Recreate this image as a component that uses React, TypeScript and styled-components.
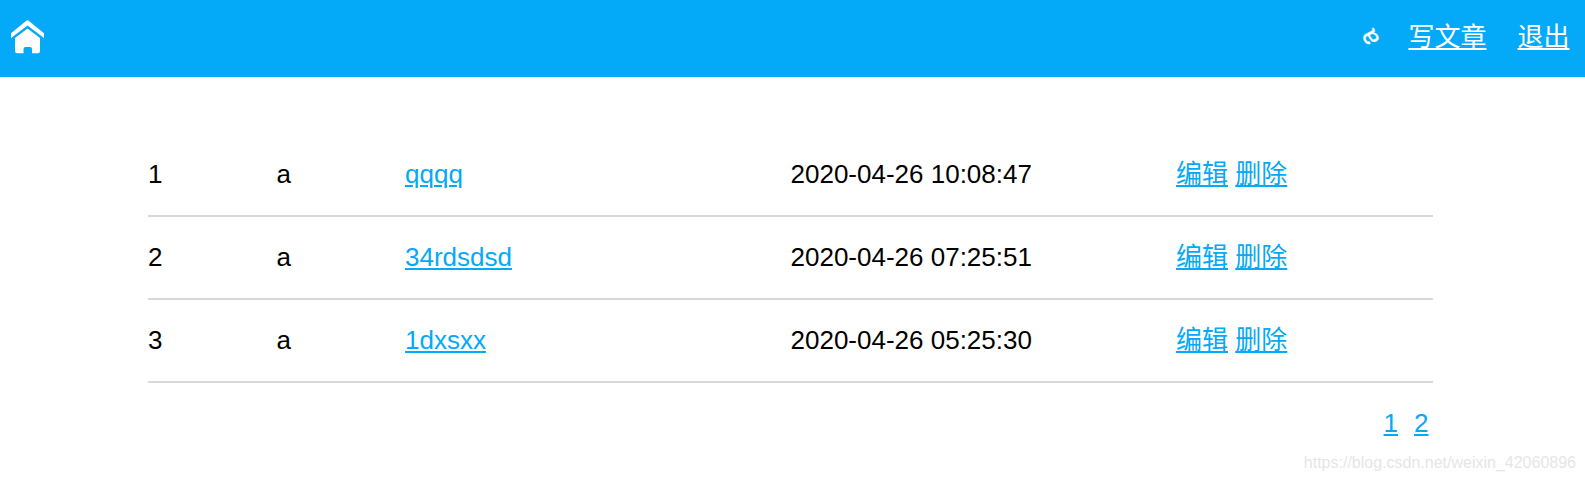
import React from 'react';
import styled, { createGlobalStyle } from 'styled-components';

const GlobalStyle = createGlobalStyle`
  body {
    margin: 0;
    background: #fff;
    color: #000;
    font-family: 'Liberation Sans', 'Noto Sans CJK SC', sans-serif;
    font-size: 26px;
  }
`;

const Header = styled.header`
  display: flex;
  align-items: center;
  justify-content: space-between;
  box-sizing: border-box;
  height: 77px;
  padding: 0 15.5px 4px 11px;
  background: #04a9f7;
`;

const HomeLink = styled.a`
  display: flex;
`;

const UserNav = styled.nav`
  display: flex;
  align-items: center;
  line-height: 40px;
`;

const Avatar = styled.span`
  width: 14px;
  margin: 0 30px 4px 0;
  color: #fff;
  font-size: 26px;
  line-height: 30px;
  text-align: center;
  -webkit-text-stroke: 0.4px #fff;
  transform: rotate(-118deg);
  transform-origin: 50% 58%;
`;

const Link = styled.a<{ $light?: boolean }>`
  color: ${({ $light }) => ($light ? '#fff' : '#04a9f7')};
  text-decoration: underline;
  text-decoration-thickness: 2px;
  text-underline-offset: 2px;
`;

const NavLink = styled(Link)`
  & + & {
    margin-left: 31px;
  }
`;

const Content = styled.main`
  width: 1285px;
  padding: 57px 0 0 148px;
`;

const Row = styled.div`
  display: grid;
  grid-template-columns: 1fr 1fr 3fr 3fr 2fr;
  height: 81px;
  line-height: 81px;
  border-bottom: 2px solid #d9d9d9;
`;

const Pager = styled.nav`
  display: flex;
  justify-content: flex-end;
  gap: 16px;
  padding-right: 4.5px;
  line-height: 81px;
`;

const Watermark = styled.footer`
  position: absolute;
  right: 9px;
  bottom: 7px;
  color: #e6e6e6;
  font-size: 16px;
  line-height: 22px;
`;

const articles = [
  { id: 1, author: 'a', title: 'qqqq', date: '2020-04-26 10:08:47' },
  { id: 2, author: 'a', title: '34rdsdsd', date: '2020-04-26 07:25:51' },
  { id: 3, author: 'a', title: '1dxsxx', date: '2020-04-26 05:25:30' },
];

const HomeIcon = () => (
  <svg width="33" height="34" viewBox="0 0 33 34" fill="#fff">
    <path d="M15 0.9 Q16.5 -0.3 18 0.9 L33 13.2 V18 L16.5 5.6 L0 18 V13.2 Z" />
    <path d="M16.5 8.6 L29 18 V31 Q29 33.2 27 33.2 H21 V29 Q21 27 19 27 H14.5 Q12.5 27 12.5 29 V33.2 H6 Q4 33.2 4 31 V18 Z" />
  </svg>
);

export default function App() {
  return (
    <>
      <GlobalStyle />
      <Header>
        <HomeLink href="#">
          <HomeIcon />
        </HomeLink>
        <UserNav>
          <Avatar>a</Avatar>
          <NavLink $light href="#">写文章</NavLink>
          <NavLink $light href="#">退出</NavLink>
        </UserNav>
      </Header>
      <Content>
        {articles.map(({ id, author, title, date }) => (
          <Row key={id}>
            <span>{id}</span>
            <span>{author}</span>
            <span><Link href="#">{title}</Link></span>
            <span>{date}</span>
            <span><Link href="#">编辑</Link> <Link href="#">删除</Link></span>
          </Row>
        ))}
        <Pager>
          <Link href="#">1</Link>
          <Link href="#">2</Link>
        </Pager>
      </Content>
      <Watermark>https://blog.csdn.net/weixin_42060896</Watermark>
    </>
  );
}
